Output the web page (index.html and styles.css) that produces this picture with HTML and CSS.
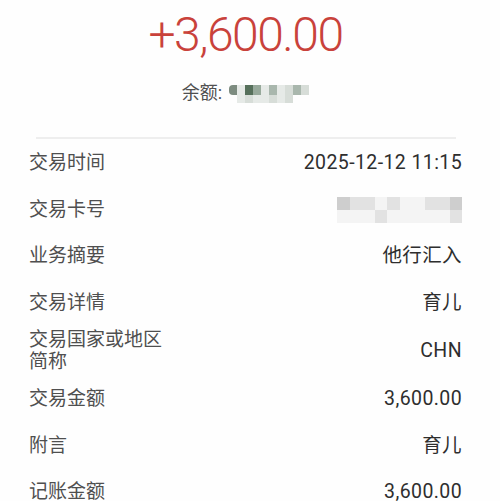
FILE: index.html
```html
<!DOCTYPE html>
<html lang="zh-CN">
<head>
    <meta charset="UTF-8">
    <meta name="viewport" content="width=device-width, initial-scale=1.0">
    <title>交易详情</title>
    <link rel="stylesheet" href="styles.css">
</head>
<body>
    <div id="page">
        <div id="summary">
            <div class="amount">+3,600.00</div>
            <div class="balance">
                <span>余额:</span>
                <span class="mosaic balance-mask">
                    <i class="c1"></i><i class="c2"></i><i class="c3"></i><i class="c4"></i><i class="c2"></i><i class="c5"></i><i class="c2"></i><i class="c6"></i><i class="c5"></i><i class="c6"></i>
                    <i class="c0"></i><i class="c2"></i><i class="c6"></i><i class="c2"></i><i class="c2"></i><i class="c6"></i><i class="c2"></i><i class="c6"></i><i class="c0"></i><i class="c0"></i>
                </span>
            </div>
        </div>

        <div class="divider"></div>

        <ul id="details">
            <li><span class="label">交易时间</span><span class="value">2025-12-12 11:15</span></li>
            <li>
                <span class="label">交易卡号</span>
                <span class="mosaic card-mask">
                    <i class="g2"></i><i class="g1"></i><i class="g1"></i><i class="g0"></i><i class="g1"></i><i class="g0"></i><i class="g0"></i><i class="g1"></i><i class="g1"></i><i class="g2"></i>
                    <i class="g0"></i><i class="g0"></i><i class="g0"></i><i class="g1"></i><i class="g0"></i><i class="g0"></i><i class="g0"></i><i class="g0"></i><i class="g0"></i><i class="g1"></i>
                </span>
            </li>
            <li><span class="label">业务摘要</span><span class="value">他行汇入</span></li>
            <li><span class="label">交易详情</span><span class="value">育儿</span></li>
            <li><span class="label">交易国家或地区<br>简称</span><span class="value">CHN</span></li>
            <li><span class="label">交易金额</span><span class="value">3,600.00</span></li>
            <li><span class="label">附言</span><span class="value">育儿</span></li>
            <li><span class="label">记账金额</span><span class="value">3,600.00</span></li>
        </ul>
    </div>
</body>
</html>
```

FILE: styles.css
```css
body {
    margin: 0;
    font-family: Roboto, "Noto Sans CJK SC", sans-serif;
    background-color: #fefefe;
    color: #2e2e2e;
}

#page {
    width: 500px;
}

#summary {
    display: flex;
    flex-direction: column;
    align-items: center;
    padding: 7px 38px 0 29px;
}

.amount {
    font-size: 48px;
    font-weight: 300;
    line-height: 56px;
    letter-spacing: -1.5px;
    color: #c9423b;
}

.balance {
    display: flex;
    align-items: center;
    gap: 7px;
    margin-top: 15px;
    height: 26px;
    font-size: 18px;
    color: #505050;
}

/* pixelated blocks that hide the numbers */
.mosaic {
    display: grid;
    filter: blur(0.7px);
}

.mosaic i {
    display: block;
}

.balance-mask {
    grid-template-columns: repeat(10, 8px);
    grid-template-rows: 10px 8px;
    margin-top: 6px;
}

.c0 { background: #fefefe; }
.c1 { background: #7d8c80; border-radius: 4px 0 0 4px; }
.c2 { background: #e6eae7; }
.c3 { background: #56705b; }
.c4 { background: #97a99b; }
.c5 { background: #a9b7ad; }
.c6 { background: #d7ddd8; }

.divider {
    height: 2px;
    margin: 33px 44px 0 36px;
    background-color: #eeeeee;
}

#details {
    list-style: none;
    margin: 0;
    padding: 1px 38px 0 29px;
}

#details li {
    display: flex;
    justify-content: space-between;
    align-items: center;
    min-height: 46.5px;
    padding: 3px 0;
    box-sizing: border-box;
}

.label {
    font-size: 19px;
    line-height: 22px;
    color: #4f4f4f;
}

.value {
    font-size: 19.5px;
    line-height: 22px;
    letter-spacing: 0.4px;
    text-align: right;
}

.card-mask {
    grid-template-columns: repeat(10, 12.5px);
    grid-template-rows: 13px 13px;
}

.g0 { background: #f4f4f4; }
.g1 { background: #e2e2e2; }
.g2 { background: #cecece; }
```
